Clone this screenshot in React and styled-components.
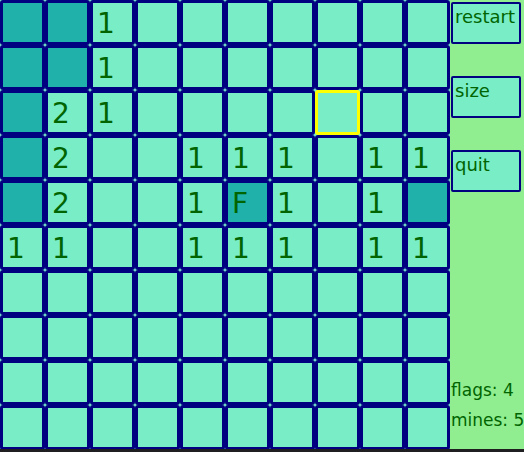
import React from 'react';
import styled, { createGlobalStyle } from 'styled-components';

const GlobalStyle = createGlobalStyle`
  html, body {
    margin: 0;
    padding: 0;
    background: #1f1f22;
    overflow: hidden;
  }
  body {
    font-family: "Comic Sans MS", "DejaVu Sans", sans-serif;
  }
`

const Screen = styled.div`
  width: 524px;
  height: 452px;
  display: flex;
  flex-direction: column;
`

const Game = styled.div`
  display: flex;
  height: 449px;
  overflow: hidden;
`

const Board = styled.div`
  display: grid;
  grid-template-columns: repeat(10, 45px);
  grid-auto-rows: 45px;
  width: 450px;
  flex-shrink: 0;
  background: #7cefc9;
`

const Cell = styled.div`
  box-sizing: border-box;
  display: flex;
  align-items: center;
  padding: 2px 0 0 4px;
  border: 3px solid ${p => (p.$selected ? '#ffff00' : '#000080')};
  border-radius: 3px;
  background: ${p => (p.$open ? '#20b2aa' : '#79edc6')};
  color: #006400;
  font-size: 28px;
  line-height: 1;
`

const Sidebar = styled.div`
  flex: 1;
  display: flex;
  flex-direction: column;
  gap: 32px;
  padding: 2px 0 14px 1px;
  background: #90ee90;
`

const MenuButton = styled.button`
  box-sizing: border-box;
  display: flex;
  align-items: flex-start;
  width: 70px;
  height: 42px;
  margin: 0;
  padding: 2px 0 0 2px;
  border: 2px solid #000080;
  border-radius: 2px;
  background: #79edc6;
  color: #006400;
  font-family: inherit;
  font-size: 18px;
  white-space: nowrap;
  overflow: hidden;
  text-align: left;
`

const Stats = styled.div`
  margin-top: auto;
  color: #006400;
  font-size: 17px;
  line-height: 30px;
  white-space: nowrap;
`

const Strip = styled.div`
  flex: 1;
  background: #1f1f22;
`

const rows = [
  'oo1.......',
  'oo1.......',
  'o21....s..',
  'o2..111.11',
  'o2..1F1.1o',
  '11..111.11',
  '..........',
  '..........',
  '..........',
  '..........',
]

const App = () => {
  return (
    <>
      <GlobalStyle />
      <Screen>
        <Game>
          <Board>
            {rows.map((row, r) =>
              row.split('').map((ch, c) => (
                <Cell
                  key={`${r}-${c}`}
                  $open={ch === 'o' || ch === 'F'}
                  $selected={ch === 's'}
                >
                  {/[0-9F]/.test(ch) ? ch : ''}
                </Cell>
              ))
            )}
          </Board>
          <Sidebar>
            <MenuButton>restart</MenuButton>
            <MenuButton>size</MenuButton>
            <MenuButton>quit</MenuButton>
            <Stats>
              <div>flags: 4</div>
              <div>mines: 5</div>
            </Stats>
          </Sidebar>
        </Game>
        <Strip />
      </Screen>
    </>
  )
}

export default App
